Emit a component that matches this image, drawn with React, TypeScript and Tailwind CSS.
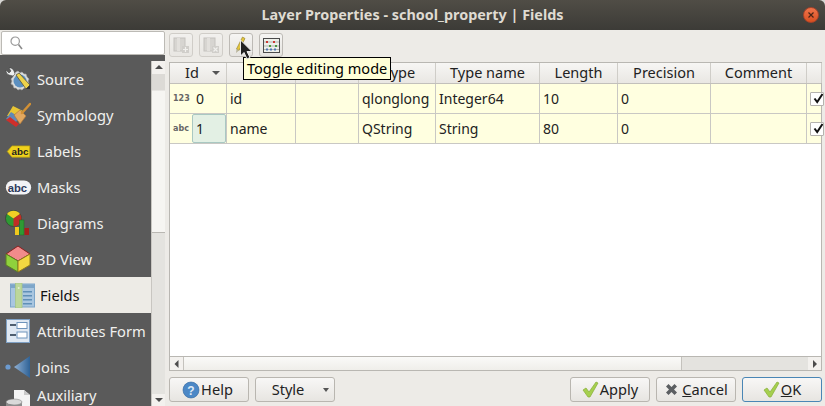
import type { ReactNode } from "react";

const FONT = "font-['Noto_Sans','Open_Sans',sans-serif]";

function SourceIcon() {
  return (
    <svg width="26" height="26" viewBox="0 0 26 26">
      <path d="M11 6 l2-1 2 2 2-1 2 2 2 0 1 3 2 2-1 2 1 3-2 1-1 3-2 0-2 2-2-1-2 1-2-2-2 0-1-3-2-1 1-3-1-2 2-2 1-3z" fill="#d9dbdb" stroke="#a8aaaa" strokeWidth="0.6" />
      <circle cx="15" cy="15" r="6.5" fill="#5b8fc0" />
      <path d="M1 4 a5 5 0 0 0 3 5 l4 1 2-2-1-3 a5 5 0 0 0-3-3 l-2 0 2 3-2 2z" fill="#eceeee" stroke="#3a3a3a" strokeWidth="0.5" />
      <path d="M11 9 l3-2 11 12-4 4z" fill="#edd24a" stroke="#57533a" strokeWidth="0.8" />
      <path d="M21 23 l4-4 0 4z" fill="#333" />
    </svg>
  );
}

function SymbologyIcon() {
  return (
    <svg width="26" height="26" viewBox="0 0 26 26">
      <path d="M2 14 L8 4 L18 9 L12 15z" fill="#e8c534" />
      <path d="M1 17 L6 10 L14 15 L10 22z" fill="#5f88b8" />
      <path d="M1 18 L5 15 L14 22 L11 25z" fill="#cf2f2a" />
      <path d="M9 13 L15 8 L21 14 L15 22z" fill="#e2a860" stroke="#b57a39" strokeWidth="0.7" />
      <path d="M17 11 L25 2" stroke="#d19035" strokeWidth="2.5" strokeLinecap="round" />
    </svg>
  );
}

function LabelsIcon() {
  return (
    <svg width="25" height="15" viewBox="0 0 26 16">
      <path d="M1 8 L6 2 H25 V14 H6z" fill="#f0d21c" stroke="#b79d13" strokeWidth="0.8" />
      <text x="5.5" y="12" fontSize="10.5" fontWeight="700" fill="#222" fontFamily="Liberation Sans, sans-serif">abc</text>
    </svg>
  );
}

function MasksIcon() {
  return (
    <svg width="27" height="15" viewBox="0 0 28 16">
      <rect x="0.5" y="0.5" width="27" height="15" rx="7.5" fill="#f2f3f6" />
      <text x="2.5" y="12.5" fontSize="12" fontWeight="700" fill="#2d3a5c" fontFamily="Liberation Sans, sans-serif">abc</text>
    </svg>
  );
}

function DiagramsIcon() {
  return (
    <svg width="26" height="26" viewBox="0 0 26 26">
      <circle cx="8.5" cy="8.5" r="8" fill="#2f9a33" stroke="#333" strokeWidth="0.6" />
      <path d="M8.5 8.5 L2 4 A8 8 0 0 1 15 4z" fill="#f1cf25" />
      <path d="M8.5 8.5 L15 4 A8 8 0 0 1 8.5 16.5z" fill="#c32c25" />
      <rect x="10" y="17" width="4" height="8" fill="#f0c81e" />
      <rect x="14.5" y="10" width="4.5" height="15" fill="#2f9a33" stroke="#1c6b20" strokeWidth="0.5" />
      <rect x="19.5" y="18" width="4.5" height="7" fill="#a81f1a" />
    </svg>
  );
}

function ThreeDIcon() {
  return (
    <svg width="26" height="28" viewBox="0 0 26 28">
      <path d="M13 1 L25 9 L13 16 L1 9z" fill="#f28b8b" stroke="#8a1f1f" strokeWidth="1" />
      <path d="M1 9 L13 16 V27 L1 20z" fill="#8fd13c" stroke="#5c7f22" strokeWidth="1" />
      <path d="M25 9 L13 16 V27 L25 20z" fill="#f3d841" stroke="#8f7b1d" strokeWidth="1" />
    </svg>
  );
}

function FieldsIcon() {
  return (
    <svg width="25" height="25" viewBox="0 0 25 25">
      <rect x="0.5" y="1" width="24" height="23" fill="#a9c6e0" stroke="#7ea6c9" />
      <rect x="1" y="1.5" width="23" height="3.5" fill="#7ea6c9" />
      {[8, 12, 16, 20].map((y) => (
        <rect key={y} x="13" y={y} width="9" height="1.5" fill="#5f8fb8" />
      ))}
      <rect x="5.5" y="0" width="6.5" height="25" fill="#bcd79a" stroke="#a5c480" strokeWidth="0.7" />
      <circle cx="8.7" cy="5" r="1" fill="#e4efd2" />
    </svg>
  );
}

function AttributesIcon() {
  return (
    <svg width="24" height="24" viewBox="0 0 24 24">
      <rect x="0.5" y="0.5" width="23" height="23" fill="#dfe8f2" stroke="#7ea0c4" />
      <rect x="4" y="5" width="6" height="2" fill="#4f5f70" />
      <rect x="11" y="3.5" width="10" height="6" fill="#fff" stroke="#6f94bb" />
      <rect x="4" y="15" width="6" height="2" fill="#4f5f70" />
      <rect x="11" y="13" width="10" height="6" fill="#fff" stroke="#6f94bb" />
    </svg>
  );
}

function JoinsIcon() {
  return (
    <svg width="26" height="24" viewBox="0 0 26 24">
      <defs>
        <linearGradient id="joinfill" x1="0" x2="1" y1="0" y2="0">
          <stop offset="0" stopColor="#8fb0d4" />
          <stop offset="1" stopColor="#2f6296" />
        </linearGradient>
      </defs>
      <circle cx="3" cy="12" r="2.6" fill="#6c9bd0" />
      <path d="M9 12 L25 1 V23z" fill="url(#joinfill)" />
    </svg>
  );
}

function AuxiliaryIcon() {
  return (
    <svg width="26" height="26" viewBox="0 0 26 26">
      <path d="M9 1 H19 L25 6 V26 H9z" fill="#f4f4f4" />
      <path d="M19 1 V6 H25z" fill="#c9c9c9" />
      <ellipse cx="9" cy="13" rx="8" ry="3" fill="#d9d9d9" stroke="#777" strokeWidth="0.5" />
      <path d="M1 13 V26 H17 V13 A8 3 0 0 1 1 13z" fill="#8d8d8d" />
    </svg>
  );
}

const navItems: { label: ReactNode; icon: ReactNode; selected?: boolean }[] = [
  { label: "Source", icon: <SourceIcon /> },
  { label: "Symbology", icon: <SymbologyIcon /> },
  { label: "Labels", icon: <LabelsIcon /> },
  { label: "Masks", icon: <MasksIcon /> },
  { label: "Diagrams", icon: <DiagramsIcon /> },
  { label: "3D View", icon: <ThreeDIcon /> },
  { label: "Fields", icon: <FieldsIcon />, selected: true },
  { label: "Attributes Form", icon: <AttributesIcon /> },
  { label: "Joins", icon: <JoinsIcon /> },
];

function NavRow({ label, icon, selected }: { label: ReactNode; icon: ReactNode; selected?: boolean }) {
  return (
    <div className={`flex h-[36px] shrink-0 items-center ${selected ? "bg-[#edebe6] pl-[8px] text-[#111]" : "pl-[4px] text-[#f0f0ee]"}`}>
      <div className="flex w-[28px] shrink-0 items-center justify-center">{icon}</div>
      <span className={`whitespace-nowrap text-[14.7px] ${selected ? "ml-[4px]" : "ml-[5px]"}`}>{label}</span>
    </div>
  );
}

function ToolButton({ children, muted }: { children: ReactNode; muted?: boolean }) {
  return (
    <div className={`flex h-[24px] w-[24px] items-center justify-center rounded-[3px] border border-[#bdbab5] bg-gradient-to-b from-[#f6f5f3] to-[#e6e4e0] ${muted ? "opacity-60" : ""}`}>
      {children}
    </div>
  );
}

function TableGlyph({ mark }: { mark: "add" | "del" }) {
  return (
    <svg width="16" height="16" viewBox="0 0 16 16">
      <rect x="1" y="1" width="11" height="13" fill="#c9c7c3" stroke="#aaa8a4" />
      <rect x="4" y="1" width="3" height="13" fill="#dcdad6" />
      <rect x="9" y="9" width="7" height="7" fill="#bdbbb7" />
      <path d={mark === "add" ? "M12.5 10v5M10 12.5h5" : "M10.5 10.5l4 4M14.5 10.5l-4 4"} stroke="#f4f4f2" strokeWidth="1.2" />
    </svg>
  );
}

function AbacusGlyph() {
  return (
    <svg width="17" height="15" viewBox="0 0 17 15">
      <rect x="0.5" y="0.5" width="16" height="14" fill="#eef0ea" stroke="#4b4b4b" />
      <path d="M1 4h15M1 8h15M1 11.5h15" stroke="#8a8a8a" strokeWidth="0.6" />
      <path d="M3 3h2v2H3zM10 3h2v2h-2z" fill="#cc3a32" />
      <path d="M6 7h2v2H6zM12 7h2v2h-2z" fill="#4d9a3d" />
      <path d="M3 10.5h2v2H3zM7 10.5h2v2H7zM11 10.5h2v2h-2z" fill="#4f78b5" />
    </svg>
  );
}

// the tooltip hides the labels of the second and third column
const columns = [
  { label: "Id", w: "w-[57px]" },
  { label: "", w: "w-[69px]" },
  { label: "", w: "w-[63px]" },
  { label: "Type", w: "w-[77px]" },
  { label: "Type name", w: "w-[104px]" },
  { label: "Length", w: "w-[78px]" },
  { label: "Precision", w: "w-[93px]" },
  { label: "Comment", w: "w-[96px]" },
  { label: "", w: "w-[15px]" },
];

const rows = [
  { tag: "123", id: "0", name: "id", type: "qlonglong", typeName: "Integer64", length: "10" },
  { tag: "abc", id: "1", name: "name", type: "QString", typeName: "String", length: "80" },
];

function Cell({ w, children }: { w: string; children?: ReactNode }) {
  return (
    <div className={`flex h-full shrink-0 items-center border-r border-[#c9c8c4] pl-[3px] ${w}`}>
      <span className="whitespace-nowrap">{children}</span>
    </div>
  );
}

function Check() {
  return (
    <div className="flex h-[14px] w-[14px] shrink-0 items-center justify-center overflow-hidden rounded-[1px] border border-[#b5b3ae] bg-white pl-[3px]">
      <svg width="11" height="11" viewBox="0 0 11 11" className="shrink-0">
        <path d="M1.5 5.5 L4.2 9 L9.5 1" fill="none" stroke="#111" strokeWidth="2" />
      </svg>
    </div>
  );
}

function DialogButton({ children, focus }: { children: ReactNode; focus?: boolean }) {
  return (
    <div className={`flex h-[25px] w-[80px] items-center justify-center rounded-[3px] border bg-gradient-to-b from-[#f8f7f6] to-[#e7e5e1] text-[14.6px] text-[#222] ${focus ? "border-[#4a86b5]" : "border-[#b9b6b0]"}`}>
      {children}
    </div>
  );
}

function CheckIcon() {
  return (
    <svg width="17" height="17" viewBox="0 0 17 17">
      <path d="M1 9 L4 7 L7 11 L14 1 L16 2 L8 16 L6 16z" fill="#a5cf4e" stroke="#86ad38" strokeWidth="0.7" />
    </svg>
  );
}

function Arrow({ dir }: { dir: "up" | "down" | "left" | "right" }) {
  const d = {
    up: "M0 5 L4 1 L8 5z",
    down: "M0 2 L8 2 L4 6z",
    left: "M5.5 0 V8 L1.5 4z",
    right: "M2 0 V8 L6 4z",
  }[dir];
  return (
    <svg width="8" height="8" viewBox="0 0 8 8">
      <path d={d} fill="#4c4c4c" />
    </svg>
  );
}

export default function App() {
  return (
    <div className={`relative flex h-[406px] w-[825px] flex-col overflow-hidden bg-[#d8d7d4] text-[15px] text-[#222] ${FONT}`}>
      <div className="relative flex h-[30px] shrink-0 items-center justify-center rounded-t-[6px] bg-gradient-to-b from-[#504d46] to-[#3c3b37] text-[14.4px] font-bold text-[#dfdbd2]">
        Layer Properties - school_property | Fields
        <div className="absolute right-[6px] top-[7px] flex h-[16px] w-[16px] items-center justify-center rounded-full border border-[#a8432a] bg-gradient-to-b from-[#f0744a] to-[#d84f1f]">
          <svg width="8" height="8" viewBox="0 0 8 8">
            <path d="M1.5 1.5l5 5M6.5 1.5l-5 5" stroke="#4a2416" strokeWidth="1.2" />
          </svg>
        </div>
      </div>

      <div className="flex min-h-0 flex-1 bg-[#edebe7]">
        <div className="flex w-[165px] shrink-0 flex-col bg-[#5a5a5a]">
          <div className="flex h-[25px] shrink-0 bg-[#edebe7] pl-[1px] pt-[1px]">
            <div className="flex h-[24px] w-[164px] items-center rounded-[2px] border border-[#bcbab5] bg-white pl-[8px]">
              <svg width="13" height="14" viewBox="0 0 13 14">
                <circle cx="5.2" cy="5.2" r="4.2" fill="none" stroke="#9a9a9a" strokeWidth="1.2" />
                <path d="M8.5 8.5 L12 13" stroke="#8a8a8a" strokeWidth="1.6" />
              </svg>
            </div>
          </div>
          <div className="h-[6px] shrink-0" />
          <div className="flex min-h-0 flex-1">
            <div className="flex min-w-0 flex-1 flex-col overflow-hidden">
              {navItems.map((item, i) => (
                <NavRow key={i} {...item} />
              ))}
              <div className="flex h-[36px] shrink-0 items-start pl-[4px] text-[#f0f0ee]">
                <div className="flex h-[30px] w-[28px] shrink-0 items-end justify-center"><AuxiliaryIcon /></div>
                <span className="ml-[5px] whitespace-nowrap text-[14.7px] leading-[20px]">Auxiliary</span>
              </div>
            </div>
            <div className="flex w-[14px] shrink-0 flex-col border-l border-[#c8c6c1] bg-[#e4e3df]">
              <div className="flex h-[13px] shrink-0 items-center justify-center bg-[#f3f1ee]"><Arrow dir="up" /></div>
              <div className="h-[159px] shrink-0 border-b border-[#b9b7b2] bg-gradient-to-b from-[#dcdad6] from-[10%] to-[#f6f5f2] to-[11%]" />
              <div className="flex-1" />
              <div className="flex h-[12px] shrink-0 items-center justify-center bg-[#f3f1ee]"><Arrow dir="down" /></div>
            </div>
          </div>
        </div>

        <div className="flex min-w-0 flex-1 flex-col pl-[4px] pr-[3px]">
          <div className="flex h-[32px] shrink-0 items-start gap-[6px] pt-[3px]">
            <ToolButton muted><TableGlyph mark="add" /></ToolButton>
            <ToolButton muted><TableGlyph mark="del" /></ToolButton>
            <ToolButton>
              <svg width="16" height="18" viewBox="0 0 16 18">
                <path d="M9.5 1 L12 2.5 L6 14.5 L3.5 13z" fill="#e3c53c" stroke="#8d7a2a" strokeWidth="0.6" />
                <path d="M3.5 13 L3 17 L6 14.5z" fill="#b8b49c" />
              </svg>
            </ToolButton>
            <ToolButton><AbacusGlyph /></ToolButton>
          </div>

          <div className="flex min-h-0 flex-1 flex-col border border-[#b9b7b2] bg-white text-[14px]">
            <div className="flex h-[21px] shrink-0 border-b border-[#c2c0bb] bg-gradient-to-b from-[#f7f6f4] to-[#e9e7e3] text-[14.5px]">
              {columns.map((c, i) => (
                <div key={i} className={`relative flex h-full shrink-0 items-center justify-center border-r border-[#cfcdc8] ${c.w} ${i === 0 ? "pr-[12px]" : ""} ${i === 3 ? "pl-[4px]" : ""}`}>
                  <span className="whitespace-nowrap">{c.label}</span>
                  {i === 0 && (
                    <div className="absolute right-[6px] top-[8px] h-0 w-0 border-x-[4px] border-t-[4px] border-x-transparent border-t-[#555]" />
                  )}
                </div>
              ))}
            </div>
            {rows.map((r, i) => (
              <div key={r.id} className="flex h-[30px] shrink-0 border-b border-[#c9c8c4] bg-[#ffffe0]">
                <div className="flex h-full w-[57px] shrink-0 items-center border-r border-[#c9c8c4]">
                  <span className="w-[22px] shrink-0 pl-[3px] font-['DejaVu_Sans'] text-[8px] font-bold text-[#666]">{r.tag}</span>
                  <span className={`flex h-full flex-1 items-center ${i === 1 ? "rounded-[2px] border border-[#a9c8c2] bg-[#e3f0e4] pl-[3px]" : "pl-[4px]"}`}>{r.id}</span>
                </div>
                <Cell w="w-[69px]">{r.name}</Cell>
                <Cell w="w-[63px]" />
                <Cell w="w-[77px]">{r.type}</Cell>
                <Cell w="w-[104px]">{r.typeName}</Cell>
                <Cell w="w-[78px]">{r.length}</Cell>
                <Cell w="w-[93px]">0</Cell>
                <Cell w="w-[96px]" />
                <div className="flex h-full w-[15px] shrink-0 items-center pl-[3px]"><Check /></div>
              </div>
            ))}
            <div className="flex-1" />
            <div className="flex h-[14px] shrink-0 border-t border-[#b9b7b2] bg-[#e4e3df]">
              <div className="flex w-[13px] shrink-0 items-center justify-center bg-[#f3f1ee]"><Arrow dir="left" /></div>
              <div className="w-[499px] shrink-0 border-x border-[#c4c2bd] bg-gradient-to-b from-[#fafaf8] to-[#efeeea]" />
              <div className="flex-1" />
              <div className="flex w-[13px] shrink-0 items-center justify-center bg-[#f3f1ee]"><Arrow dir="right" /></div>
            </div>
          </div>

          <div className="flex h-[35px] shrink-0 items-start justify-between pt-[6px]">
            <div className="flex gap-[6px]">
              <DialogButton>
                <svg width="18" height="18" viewBox="0 0 18 18" className="ml-[-3px] mr-[1px]">
                  <circle cx="9" cy="9" r="8" fill="#4c88c6" stroke="#2f649e" strokeWidth="0.6" />
                  <text x="9" y="13.5" textAnchor="middle" fontSize="12" fontWeight="700" fill="#dfeaf5" fontFamily="Liberation Sans, sans-serif">?</text>
                </svg>
                Help
              </DialogButton>
              <DialogButton>
                <span className="ml-[-8px]">Style</span>
                <div className="relative left-[19px] h-0 w-0 border-x-[3px] border-t-[4px] border-x-transparent border-t-[#555]" />
              </DialogButton>
            </div>
            <div className="flex gap-[6px]">
              <DialogButton><CheckIcon /><span className="ml-[1px]">Apply</span></DialogButton>
              <DialogButton>
                <svg width="15" height="15" viewBox="0 0 15 15" className="mr-[3px]">
                  <path d="M2 4.5l2.5-2.5 3 3 3-3 2.5 2.5-3 3 3 3-2.5 2.5-3-3-3 3-2.5-2.5 3-3z" fill="#5c5f62" />
                </svg>
                <span><u>C</u>ancel</span>
              </DialogButton>
              <DialogButton focus><CheckIcon /><span className="ml-[1px]"><u>O</u>K</span></DialogButton>
            </div>
          </div>
        </div>
      </div>

      <div className="absolute left-[243px] top-[57px] flex h-[23px] items-center whitespace-nowrap border border-black bg-[#ffffd8] px-[3px] text-[14.5px] text-black">
        Toggle editing mode
      </div>
      <svg width="16" height="22" viewBox="0 0 16 22" className="absolute left-[239px] top-[39px]">
        <path d="M1.5 1 V17 L5 13.5 L8 20 L11 18.5 L8 12.5 L13 12.5z" fill="#222" stroke="#eee" strokeWidth="1" />
      </svg>
    </div>
  );
}
